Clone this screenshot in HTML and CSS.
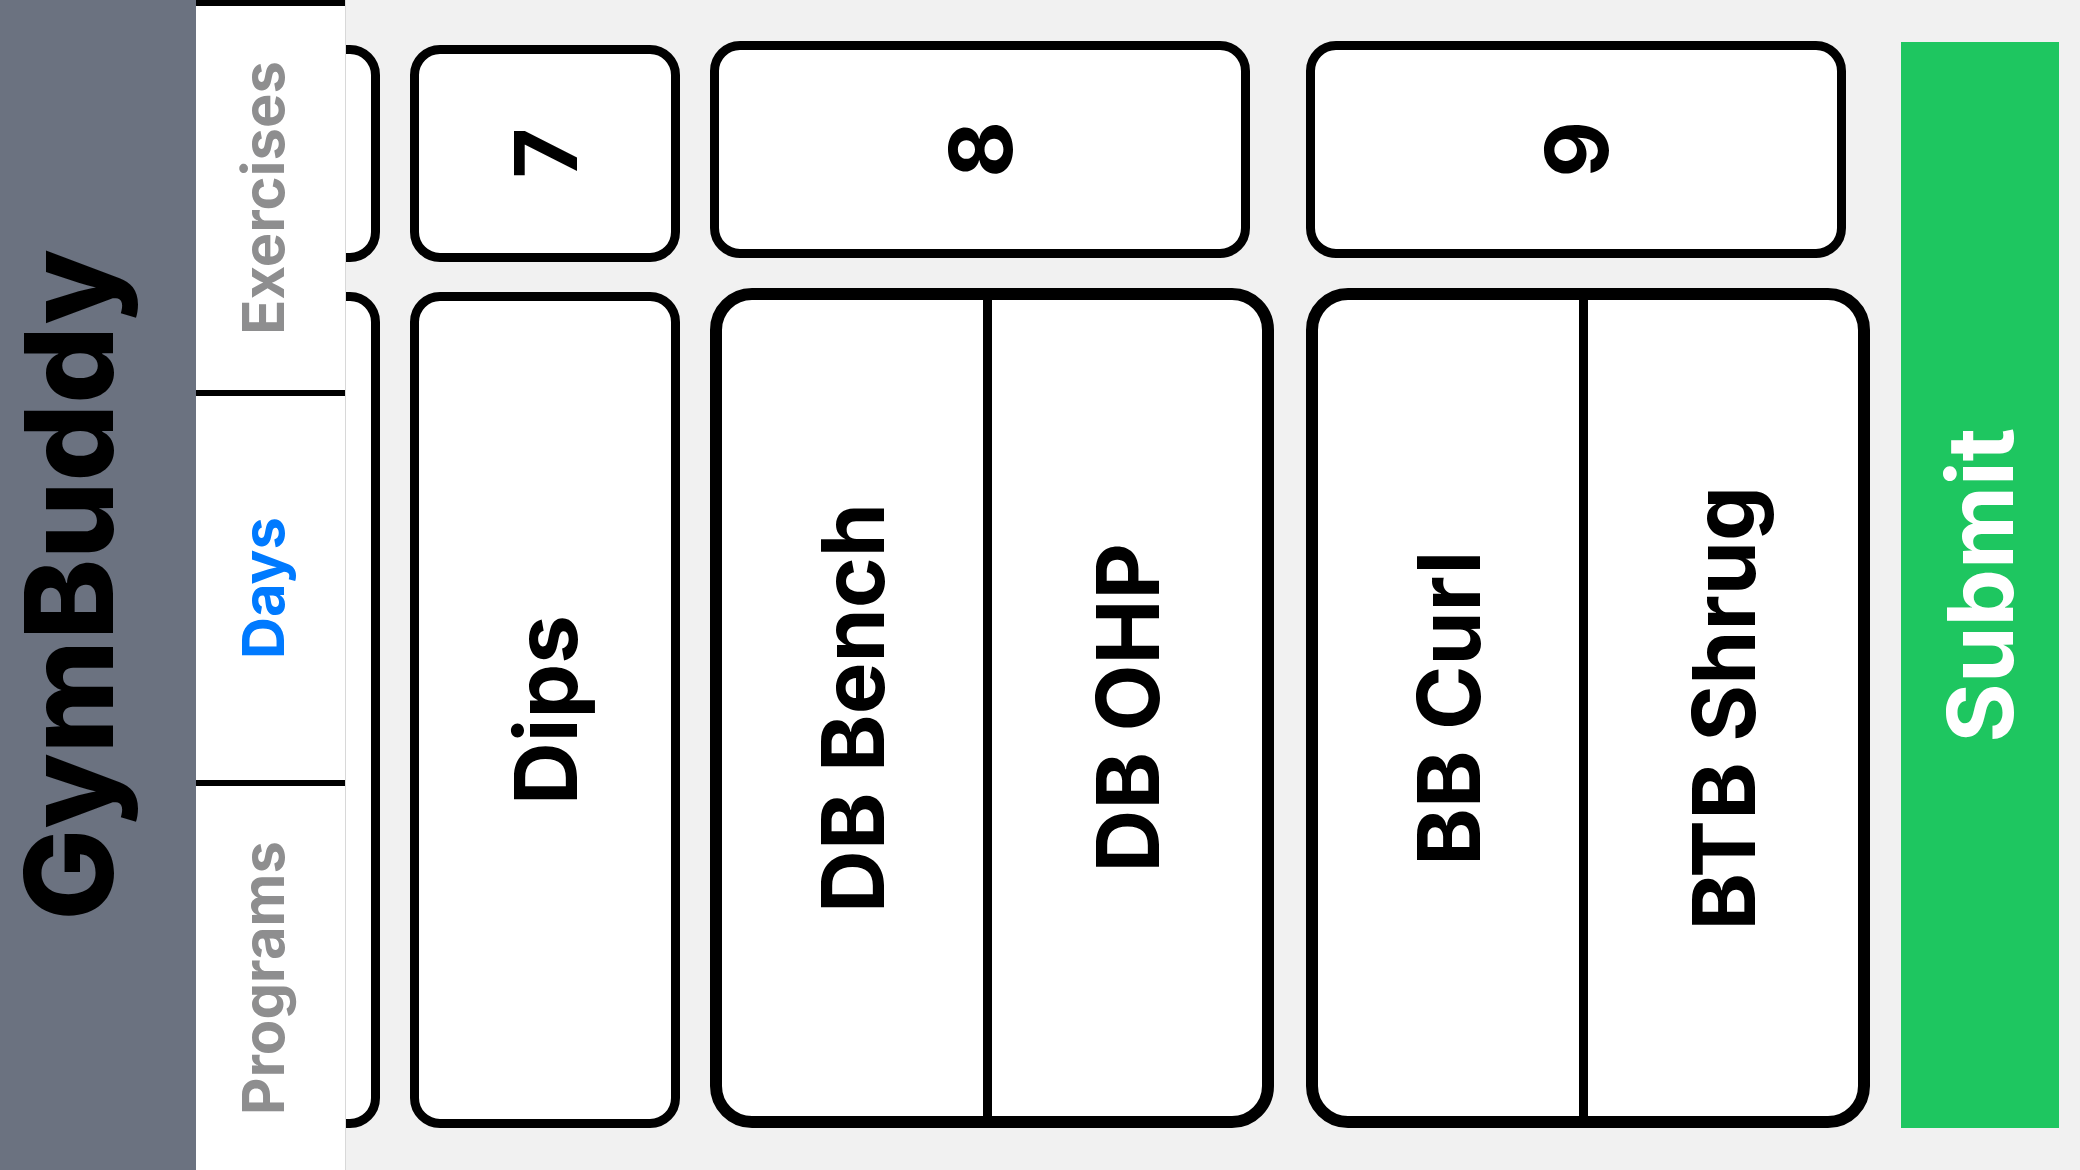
FILE: index.html
```html
<!DOCTYPE html>
<html lang="en">
<head>
<meta charset="utf-8">
<title>GymBuddy</title>
<link rel="stylesheet" href="styles.css">
</head>
<body>
<div class="app">
  <header class="app-header">
    <h1 class="sideways app-title">GymBuddy</h1>
  </header>
  <nav class="tabs">
    <a class="tab" href="#programs"><span class="sideways">Programs</span></a>
    <a class="tab tab-active" href="#days" aria-current="page"><span class="sideways">Days</span></a>
    <a class="tab" href="#exercises"><span class="sideways">Exercises</span></a>
  </nav>
  <main class="day">
    <ol class="exercises">
      <li class="exercise">
        <div class="card name"></div>
        <div class="card number"></div>
      </li>
      <li class="exercise">
        <div class="card name"><span class="sideways">Dips</span></div>
        <div class="card number"><span class="sideways">7</span></div>
      </li>
      <li class="exercise superset">
        <div class="card name">
          <div class="part"><span class="sideways">DB Bench</span></div>
          <div class="part"><span class="sideways">DB OHP</span></div>
        </div>
        <div class="card number"><span class="sideways">8</span></div>
      </li>
      <li class="exercise superset">
        <div class="card name">
          <div class="part"><span class="sideways">BB Curl</span></div>
          <div class="part"><span class="sideways">BTB Shrug</span></div>
        </div>
        <div class="card number"><span class="sideways">9</span></div>
      </li>
    </ol>
    <button class="submit" type="button"><span class="sideways">Submit</span></button>
  </main>
</div>
</body>
</html>
```
FILE: styles.css
```css
* {
  box-sizing: border-box;
}

body {
  margin: 0;
  background: #f1f1f1;
  color: #000;
  font-family: Inter, "Liberation Sans", sans-serif;
}

/* The interface is turned a quarter to the left: text reads bottom to top. */
.sideways {
  writing-mode: vertical-rl;
  transform: rotate(180deg);
  white-space: nowrap;
  line-height: 1;
}

.app {
  display: flex;
  height: 100vh;
}

.app-header {
  display: flex;
  flex: none;
  align-items: center;
  width: 196px;
  background: #6b7280;
}

.app-title {
  margin: 0;
  font-size: 122px;
  font-weight: 800;
  line-height: 138px;
}

.tabs {
  display: flex;
  flex: none;
  flex-direction: column-reverse;
  width: 150px;
  border-right: 1px solid #d8d8d8;
  background: #fff;
}

.tab {
  display: flex;
  flex: 1;
  align-items: center;
  justify-content: center;
  padding-right: 16px;
  border-top: 6px solid #000;
  color: #8e8e8f;
  font-size: 58px;
  font-weight: 700;
  text-decoration: none;
}

.tab-active {
  color: #007aff;
}

.day {
  display: flex;
  flex: 1;
  gap: 31px;
  min-width: 0;
  padding-right: 21px;
}

.exercises {
  display: flex;
  flex: 1;
  gap: 30px;
  justify-content: flex-end;
  min-width: 0;
  margin: 0;
  padding: 0;
  overflow: hidden;
  list-style: none;
}

.exercise {
  display: flex;
  flex: none;
  flex-direction: column-reverse;
  gap: 30px;
  width: 270px;
  padding: 45px 0 42px;
}

.superset {
  width: 564px;
  padding-top: 41px;
}

.superset + .superset {
  margin-left: 2px;
}

.card {
  display: flex;
  align-items: center;
  justify-content: center;
  border: 9px solid #000;
  border-radius: 30px;
  background: #fff;
  font-size: 87px;
  font-weight: 700;
}

.name {
  flex: 1;
}

.number {
  flex: 0 0 20%;
}

.superset .name {
  align-items: stretch;
  border-width: 12px;
  border-radius: 42px;
}

.superset .number {
  width: 540px;
}

.part {
  display: flex;
  flex: 1;
  align-items: center;
  justify-content: center;
}

.part + .part {
  flex: 0 0 279px;
  border-left: 9px solid #000;
}

.submit {
  display: flex;
  flex: none;
  align-items: center;
  justify-content: center;
  width: 158px;
  margin: 42px 0;
  padding: 0;
  border: 0;
  background: #1ec660;
  color: #fff;
  font-family: inherit;
  font-size: 91px;
  font-weight: 700;
}
```
